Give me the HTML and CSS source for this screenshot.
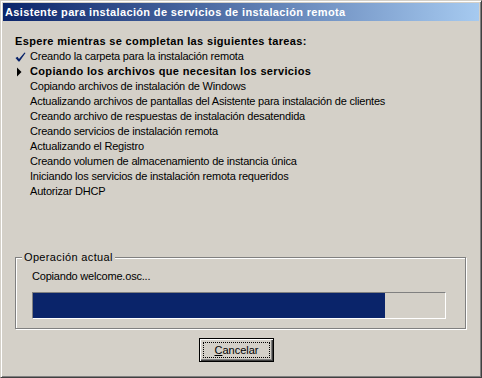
FILE: index.html
```html
<html>
<head>
    <link rel="stylesheet" href="styles.css">
</head>
<body>
    <div class="window">
        <div class="titlebar">Asistente para instalación de servicios de instalación remota</div>
        <div class="content">
            <p class="heading">Espere mientras se completan las siguientes tareas:</p>
            <ul class="tasks">
                <li class="done">
                    <svg class="mark" width="11" height="10" viewBox="0 0 11 10">
                        <path d="M0.5 6 L2.5 4.8 L4 7 L9.5 0.5 L10.5 1 L4.5 9.5 L3.5 9.5 Z" fill="#0a246a"/>
                    </svg>
                    Creando la carpeta para la instalación remota
                </li>
                <li class="current">
                    <svg class="mark" width="11" height="10" viewBox="0 0 11 10">
                        <path d="M2 0.5 L6.5 5 L2 9.5 Z" fill="#000"/>
                    </svg>
                    Copiando los archivos que necesitan los servicios
                </li>
                <li>Copiando archivos de instalación de Windows</li>
                <li>Actualizando archivos de pantallas del Asistente para instalación de clientes</li>
                <li>Creando archivo de respuestas de instalación desatendida</li>
                <li>Creando servicios de instalación remota</li>
                <li>Actualizando el Registro</li>
                <li>Creando volumen de almacenamiento de instancia única</li>
                <li>Iniciando los servicios de instalación remota requeridos</li>
                <li>Autorizar DHCP</li>
            </ul>

            <div class="groupbox">
                <span class="legend">Operación actual</span>
                <p class="operation">Copiando welcome.osc...</p>
                <div class="progress">
                    <div class="progress-fill" style="width: 85.5%"></div>
                </div>
            </div>

            <div class="buttons">
                <button class="default-btn"><span class="focus"><u>C</u>ancelar</span></button>
            </div>
        </div>
    </div>
</body>
</html>
```

FILE: styles.css
```css
:root {
    --face: #d4d0c8;
    --shadow: #808080;
    --dark: #404040;
    --navy: #0a246a;
    --ui-font: "Liberation Sans", Arial, sans-serif;
}

* {
    box-sizing: border-box;
    margin: 0px;
    padding: 0px;
}

body {
    background-color: var(--face);
    font-family: var(--ui-font);
    font-size: 11px;
    color: #000;
}

.window {
    width: 482px;
    height: 378px;
    padding: 2px;

    background-color: var(--face);
    border: 1px solid;
    border-color: var(--face) var(--dark) var(--dark) var(--face);
    box-shadow: inset 1px 1px 0 #fff, inset -1px -1px 0 var(--shadow);
}

.titlebar {
    height: 18px;
    padding-left: 2px;

    background: linear-gradient(to right, var(--navy), #a6caf0);
    color: #fff;
    font-weight: bold;
    letter-spacing: 0.35px;
    line-height: 18px;
    white-space: nowrap;
}

.content {
    padding: 13px 13px 0px 12px;
}

.heading {
    font-weight: bold;
    letter-spacing: 0.35px;
    line-height: 15px;
}

.tasks {
    list-style: none;
    letter-spacing: -0.2px;
    line-height: 15px;
}

.tasks li {
    position: relative;
    padding-left: 15px;
    white-space: nowrap;
}

.tasks .current {
    font-weight: bold;
    letter-spacing: 0.35px;
}

.mark {
    position: absolute;
    left: 0px;
    top: 3px;
}

.groupbox {
    position: relative;
    margin-top: 58px;
    width: 451px;
    padding: 11px 18px 9px 16px;

    border: 1px solid var(--shadow);
    box-shadow: 1px 1px 0 #fff, inset 1px 1px 0 #fff;
}

.legend {
    position: absolute;
    left: 6px;
    top: -8px;
    padding: 0px 2px;

    background-color: var(--face);
    letter-spacing: 0.35px;
    line-height: 15px;
}

.operation {
    letter-spacing: -0.2px;
    line-height: 15px;
}

.progress {
    height: 27px;
    margin-top: 8px;
    width: 414px;

    border: 1px solid;
    border-color: var(--shadow) #fff #fff var(--shadow);
}

.progress-fill {
    height: 100%;
    background-color: var(--navy);
}

.buttons {
    padding-left: 184px;
    margin-top: 9px;
}

.default-btn {
    width: 75px;
    height: 24px;
    padding: 3px;

    background-color: var(--face);
    border: 1px solid #000;
    box-shadow: inset 1px 1px 0 #fff, inset -1px -1px 0 var(--dark), inset -2px -2px 0 var(--shadow);

    font-family: var(--ui-font);
    font-size: 11px;
    color: #000;
}

.focus {
    display: block;
    height: 100%;
    border: 1px dotted #000;
    line-height: 14px;
}
```
